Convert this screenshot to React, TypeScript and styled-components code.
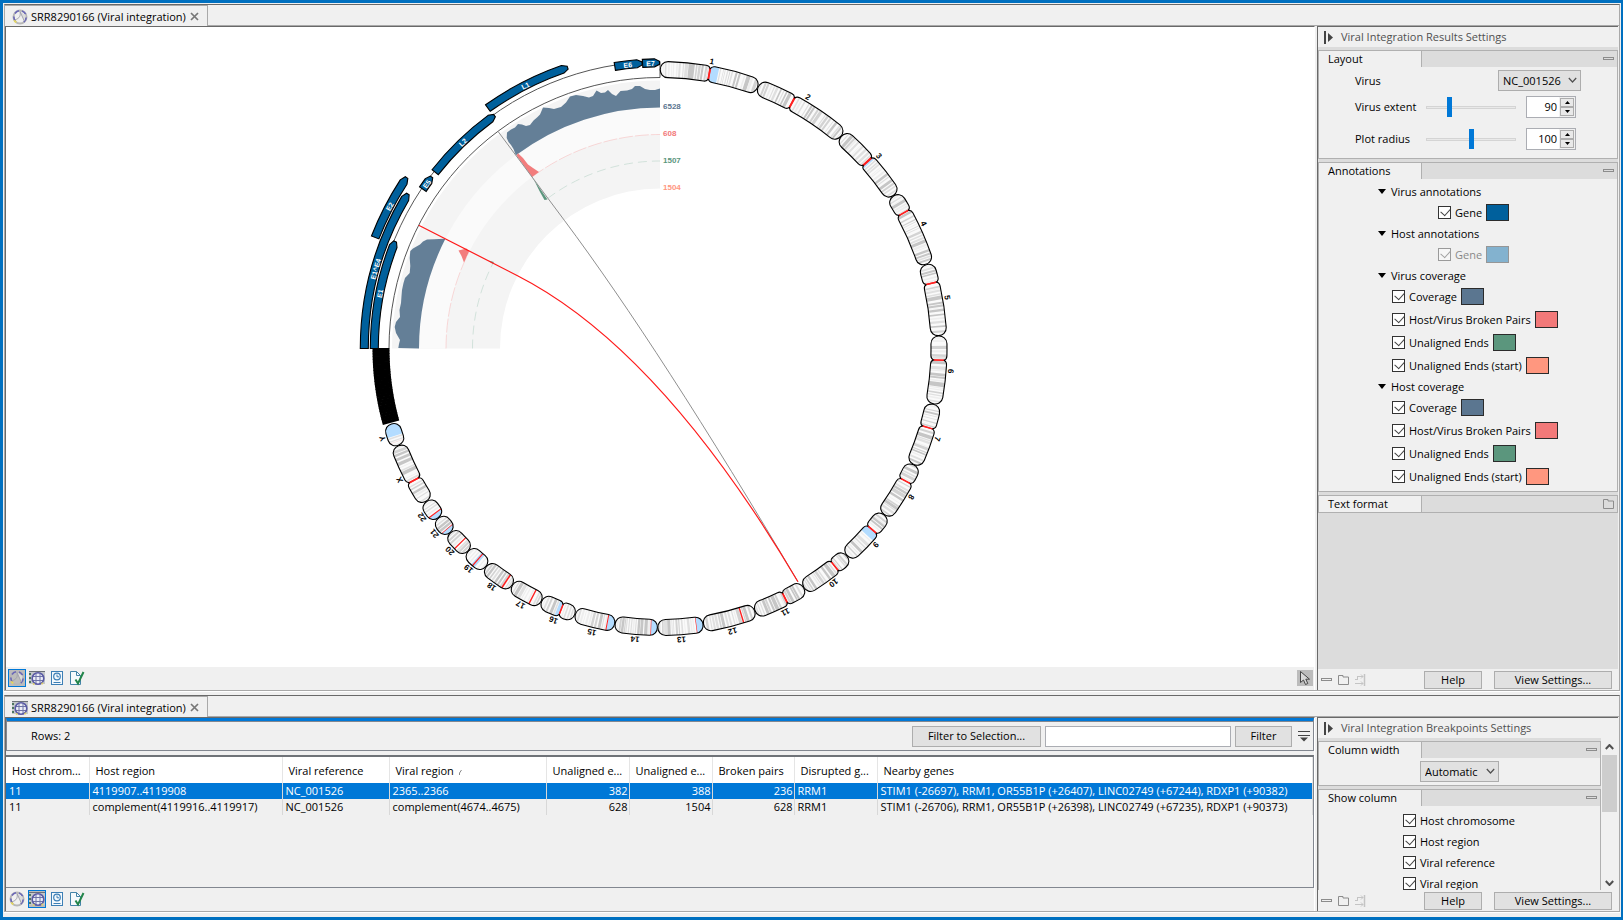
import React, { useState } from "react";
import styled, { createGlobalStyle, css } from "styled-components";

const GlobalStyle = createGlobalStyle`
  * { box-sizing: border-box; }
  body {
    margin: 0;
    background: #fff;
    color: #000;
    font-family: "Open Sans", "Noto Sans", sans-serif;
    font-size: 11px;
    line-height: 16px;
  }
  button, input, select { font: inherit; color: inherit; }
`;

const line = { dark: "#696969", mid: "#a9a9a9", box: "#828790" };

/* ---------- window frame ---------- */

const Window = styled.main`
  height: 100vh;
  display: flex;
  flex-direction: column;
  border-bottom: 1px solid #fff;
`;

const Frame = styled.div`
  flex: 1;
  min-height: 0;
  display: flex;
  flex-direction: column;
  gap: 4px;
  padding: 1px 1px 5px;
  background: #f0f0f0;
  border: 3px solid #0070c0;
  border-right-width: 2px;
`;

const Pane = styled.section<{ $grow: number }>`
  flex: ${(p) => p.$grow} 1 0;
  min-height: 0;
  display: flex;
  flex-direction: column;
  border: 1px solid ${line.mid};
  border-top-color: ${line.dark};
  box-shadow: 0 1px 0 #fff;
`;

const TabStrip = styled.div`
  flex: none;
  height: 21px;
  display: flex;
  border-bottom: 1px solid ${line.mid};
`;

const Tab = styled.div`
  height: 21px;
  display: flex;
  align-items: center;
  gap: 3px;
  padding: 1px 7px 0;
  background: #f0f0f0;
  border-right: 1px solid ${line.mid};
  border-top: 1px solid ${line.mid};
`;

const CloseButton = styled.button`
  display: flex;
  padding: 0 1px;
  border: 0;
  background: none;
`;

const PaneBody = styled.div`
  flex: 1;
  min-height: 0;
  display: flex;
  gap: 2px;
  padding-right: 1px;
`;

const Work = styled.div`
  flex: 1;
  min-width: 0;
  display: flex;
  flex-direction: column;
  border-top: 1px solid ${line.dark};
  border-left: 1px solid ${line.dark};
  border-right: 1px solid #fff;
`;

const Canvas = styled.div`
  flex: 1;
  min-height: 0;
  background: #fff;
  svg { display: block; width: 100%; height: 100%; }
`;

const StatusBar = styled.div`
  flex: none;
  height: 23px;
  display: flex;
  align-items: center;
  gap: 2px;
  padding: 0 1px 1px 2px;
`;

const ViewButton = styled.button<{ $active?: boolean }>`
  width: 18px;
  height: 18px;
  display: flex;
  align-items: center;
  justify-content: center;
  padding: 0;
  border: 1px solid ${(p) => (p.$active ? "#0078d7" : "transparent")};
  background: ${(p) => (p.$active ? "#bcbcbc" : "transparent")};
`;

const PointerButton = styled(ViewButton)`
  width: 16px;
  height: 16px;
  margin-left: auto;
  border: 0;
  background: #bcbcbc;
`;

/* ---------- side panel ---------- */

const Side = styled.aside`
  flex: 0 0 301px;
  min-width: 0;
  min-height: 0;
  display: flex;
  flex-direction: column;
  border-left: 1px solid ${line.dark};
  border-top: 1px solid ${line.dark};
`;

const SideTitle = styled.h2`
  flex: none;
  height: 20px;
  margin: 0;
  display: flex;
  align-items: center;
  gap: 7px;
  padding-left: 6px;
  font-size: 11px;
  font-weight: 400;
  color: #505050;
`;

const SideScroll = styled.div`
  flex: 1;
  min-height: 0;
  display: flex;
  background: #dcdcdc;
`;

const Sections = styled.div`
  flex: 1;
  min-width: 0;
  overflow: hidden;
  display: flex;
  flex-direction: column;
  gap: 3px;
  padding-top: 3px;
`;

const SectionBox = styled.section`
  flex: none;
  border: 1px solid #b0b0b0;
  background: #f0f0f0;
`;

const SectionHead = styled.header`
  height: 16px;
  display: flex;
  align-items: center;
  justify-content: space-between;
  padding-right: 3px;
  background: #dcdcdc;
`;

const SectionName = styled.h3`
  width: 103px;
  height: 16px;
  margin: 0;
  padding-left: 9px;
  font-size: 11px;
  font-weight: 400;
  background: #f0f0f0;
  border-right: 1px solid #b0b0b0;
`;

const IconButton = styled.button`
  display: flex;
  padding: 0;
  border: 0;
  background: none;
`;

const LayoutGrid = styled.div`
  display: grid;
  grid-template-columns: 71px 90px 1fr;
  grid-template-rows: 27px 26px 38px;
  align-items: center;
  padding: 0 36px 0 36px;
`;

const Cell = styled.div<{ $pad?: number; $wide?: boolean }>`
  grid-column: ${(p) => (p.$wide ? "2 / 4" : "auto")};
  display: flex;
  justify-content: flex-end;
  padding-right: ${(p) => p.$pad ?? 0}px;
`;

const SelectWrap = styled.span<{ $w: number }>`
  position: relative;
  display: inline-flex;
  width: ${(p) => p.$w}px;
  height: 21px;
  svg { position: absolute; right: 4px; top: 7px; pointer-events: none; }
`;

const SelectBox = styled.select`
  width: 100%;
  appearance: none;
  padding: 0 4px;
  border: 1px solid #adadad;
  border-radius: 0;
  background: #e1e1e1;
`;

const Slider = styled.input`
  width: 90px;
  height: 20px;
  margin: 0;
  appearance: none;
  background: transparent;
  &::-webkit-slider-runnable-track {
    height: 3px;
    border: 1px solid #d4d4d4;
    background: #e9e9e9;
  }
  &::-webkit-slider-thumb {
    appearance: none;
    width: 5px;
    height: 20px;
    margin-top: -10px;
    background: #0078d7;
  }
`;

const SpinnerBox = styled.span`
  width: 50px;
  height: 22px;
  flex: none;
  display: flex;
  border: 1px solid #abadb3;
  background: #fff;
`;

const SpinnerInput = styled.input`
  flex: 1;
  min-width: 0;
  padding: 0 2px 0 0;
  border: 0;
  background: none;
  text-align: right;
`;

const SpinnerButtons = styled.span`
  width: 16px;
  display: flex;
  flex-direction: column;
  padding: 1px;
  background: #f0f0f0;
`;

const SpinnerButton = styled.button`
  flex: 1;
  display: flex;
  align-items: center;
  justify-content: center;
  padding: 0;
  border: 1px solid #adadad;
  background: #e9e9e9;
`;

const Tree = styled.div`
  padding: 3px 0;
`;

const TreeHead = styled.div`
  height: 19px;
  display: flex;
  align-items: center;
  gap: 5px;
  padding-left: 59px;
`;

const TreeRow = styled.div<{ $indent: number; $h: number; $off?: boolean }>`
  height: ${(p) => p.$h}px;
  display: flex;
  align-items: center;
  gap: 4px;
  padding-left: ${(p) => p.$indent}px;
  opacity: ${(p) => (p.$off ? 0.45 : 1)};
`;

const CheckLabel = styled.label`
  display: flex;
  align-items: center;
  gap: 4px;
`;

const Check = styled.input`
  position: relative;
  width: 13px;
  height: 13px;
  margin: 0;
  appearance: none;
  border: 1px solid #333;
  background: #fff;
  &:checked::after {
    content: "";
    position: absolute;
    left: 2px;
    top: 1px;
    width: 8px;
    height: 5px;
    border: solid #444;
    border-width: 0 0 1px 1px;
    transform: rotate(-48deg);
  }
`;

const Swatch = styled.button<{ $color: string }>`
  width: 23px;
  height: 17px;
  padding: 0;
  border: 1px solid #2b2b2b;
  background: ${(p) => p.$color};
`;

const ColumnWidthRow = styled.div`
  height: 27px;
  display: flex;
  align-items: center;
  padding-left: 101px;
`;

const Columns = styled.div`
  padding-top: 4px;
`;

const ScrollRail = styled.div`
  flex: 0 0 17px;
  display: flex;
  flex-direction: column;
  align-items: center;
  padding: 6px 1px 4px;
  background: #f0f0f0;
`;

const ScrollThumb = styled.div`
  width: 15px;
  height: 57px;
  margin: 5px 0 auto;
  background: #cdcdcd;
`;

const SideFooter = styled.footer`
  flex: none;
  height: 21px;
  display: flex;
  align-items: center;
  gap: 6px;
  padding: 0 6px 0 3px;
`;

const ButtonGroup = styled.div`
  margin-left: auto;
  display: flex;
  gap: 12px;
`;

const pushButton = css`
  border: 1px solid #adadad;
  background: #e1e1e1;
  padding: 0;
  line-height: 16px;
`;

const FooterButton = styled.button<{ $w: number }>`
  ${pushButton}
  width: ${(p) => p.$w}px;
  height: 18px;
`;

/* ---------- table view ---------- */

const ToolBar = styled.div`
  flex: none;
  height: 33px;
  display: flex;
  align-items: center;
  gap: 4px;
  padding: 1px 3px 0 24px;
  border: 1px solid ${line.box};
  border-top: 3px solid #0078d7;
  box-shadow: inset 0 1px 0 ${line.box};
`;

const RowCount = styled.span`
  margin-right: auto;
`;

const FilterButton = styled.button<{ $w: number }>`
  ${pushButton}
  width: ${(p) => p.$w}px;
  height: 21px;
`;

const FilterInput = styled.input`
  width: 186px;
  height: 21px;
  padding: 0 4px;
  border: 1px solid #abadb3;
  background: #fff;
`;

const FilterMenu = styled(IconButton)`
  margin-left: 2px;
`;

const TableBox = styled.div`
  flex: 1;
  min-height: 0;
  overflow: hidden;
  margin-top: 4px;
  border: 1px solid ${line.box};
  border-top: 2px solid #6f7378;
  border-left: 0;
`;

const Table = styled.table`
  width: 100%;
  table-layout: fixed;
  border-collapse: collapse;
`;

const HeadCell = styled.th`
  height: 26px;
  padding: 1px 0 0 6px;
  overflow: hidden;
  white-space: nowrap;
  text-align: left;
  font-weight: 400;
  background: #fff;
  border-right: 1px solid #e5e5e5;
`;

const Row = styled.tr<{ $selected: boolean }>`
  color: ${(p) => (p.$selected ? "#fff" : "#000")};
  background: ${(p) => (p.$selected ? "#0078d7" : "transparent")};
`;

const BodyCell = styled.td<{ $right?: boolean }>`
  height: 16px;
  padding: 0 1px 0 3px;
  overflow: hidden;
  white-space: nowrap;
  text-align: ${(p) => (p.$right ? "right" : "left")};
  border-right: 1px solid #d8d8d8;
`;

/* ---------- icons ---------- */

const CircosIcon = () => (
  <svg width="16" height="16" viewBox="0 0 16 16" fill="none">
    <circle cx="8" cy="8" r="6.5" stroke="#b7b7b7" strokeWidth="2" />
    <path d="M3 4.5A6.3 6.3 0 0 1 7 1.7M10 1.9a6.3 6.3 0 0 1 3.6 3.2M14.2 8.5a6.3 6.3 0 0 1-2.4 4.5M1.8 7.5a6.3 6.3 0 0 0 1.8 4.6" stroke="#6a67b8" strokeWidth="1.600" />
    <path d="M2.3 11.3a6.3 6.3 0 0 0 2 2" stroke="#e6d860" strokeWidth="2" />
    <path d="M8.300 2.500 12.200 12l1.300-6z" fill="#dcdcdc" />
    <path d="M3 10.800C7.500 9.500 9 6.500 8 2.500L12.300 12" stroke="#a3a3ad" />
  </svg>
);

const GridCircosIcon = () => (
  <svg width="16" height="16" viewBox="0 0 16 16" fill="none">
    <path d="M0 1h16v13H0z" fill="#c3c7c9" />
    <path d="M0 1.500h16" stroke="#6b7079" />
    <path d="M1 3v12" stroke="#4d7560" strokeWidth="2" strokeDasharray="2 2" />
    <circle cx="9" cy="8.500" r="5.800" fill="#eceef7" />
    <path d="M3.500 6.500h11M3.500 10.500h11M7 3v11M11 3v11" stroke="#6f74a8" />
    <circle cx="9" cy="8.500" r="5.800" stroke="#5a5aa5" strokeWidth="1.600" />
    <path d="M4 13.500l1.500 1M12.500 14l1.500-1" stroke="#ddd06a" strokeWidth="1.600" />
  </svg>
);

const HistoryIcon = () => (
  <svg width="12" height="14" viewBox="0 0 12 14" fill="none" stroke="#3d7fb5">
    <rect x=".5" y=".5" width="11" height="13" fill="#f4f9fd" />
    <circle cx="6" cy="5.500" r="3.300" strokeWidth="1.200" />
    <path d="M6 3.500v2.300h2M2.500 11.500h7" />
  </svg>
);

const CheckPageIcon = () => (
  <svg width="15" height="16" viewBox="0 0 15 16" fill="none">
    <path d="M.5 1.500h6l4 4v9H.5z" fill="#f6fafc" stroke="#4584a8" />
    <path d="M6.500 1.500v4h4" stroke="#4584a8" />
    <path d="M5.500 9.500 8 13.500 13.500 2" stroke="#23854a" strokeWidth="2" />
  </svg>
);

const CursorIcon = () => (
  <svg width="12" height="16" viewBox="0 0 12 16" fill="#d9d9d9" stroke="#444">
    <path d="M1.500 1.500v11l3-2.500 2 4.500 2.300-1-2-4.300h3.700z" />
  </svg>
);

const CloseIcon = () => (
  <svg width="9" height="9" viewBox="0 0 9 9" stroke="#777" strokeWidth="1.700">
    <path d="M1 1l7 7M8 1L1 8" />
  </svg>
);

const ExpandIcon = () => (
  <svg width="10" height="13" viewBox="0 0 10 13" fill="#444">
    <rect width="2" height="13" />
    <path d="M4 2v9l5-4.500z" />
  </svg>
);

const MinusIcon = () => (
  <svg width="11" height="4" viewBox="0 0 11 4" fill="none" stroke="#8c8c8c">
    <rect x=".5" y=".5" width="10" height="2" />
  </svg>
);

const FolderIcon = () => (
  <svg width="11" height="10" viewBox="0 0 11 10" fill="none" stroke="#8c8c8c">
    <path d="M.5 9.500V.5h4.500v1.500h5.500v7.500z" />
  </svg>
);

const DockIcon = () => (
  <svg width="11" height="12" viewBox="0 0 11 12" fill="none" stroke="#c4c4c4">
    <path d="M2 2.500h6M0 5.500h3M0 9.500h8M6 .5l2 2-2 2M6 7.500l2 2-2 2M2.500 5.500v-3" />
    <path d="M9.500 0v12" strokeWidth="1.500" />
  </svg>
);

const Chevron = ({ up = false, bold = false }) => (
  <svg width="9" height="6" viewBox="0 0 9 6" fill="none" stroke="#505050" strokeWidth={bold ? 2 : 1.2}>
    <path d={up ? "M.8 5l3.700-4 3.700 4" : "M.8 1l3.700 4L8.200 1"} />
  </svg>
);

const SmallTriangle = ({ up = false }) => (
  <svg width="5" height="3" viewBox="0 0 5 3">
    <path d={up ? "M0 3h5L2.500 0z" : "M0 0h5L2.500 3z"} />
  </svg>
);

const TreeTriangle = () => (
  <svg width="8" height="5" viewBox="0 0 8 5">
    <path d="M0 0h8L4 5z" />
  </svg>
);

const FilterMenuIcon = () => (
  <svg width="12" height="11" viewBox="0 0 12 11" fill="#444">
    <path d="M0 0h12v1H0zM0 4h12v1H0zM2 6.500h8L6 10.500z" />
  </svg>
);

const SortMark = () => (
  <svg width="9" height="6" viewBox="0 0 9 6" fill="none" stroke="#888">
    <path d="M5.500 6V4l2-3" />
  </svg>
);

/* ---------- circular plot ---------- */

const CX = 660;
const CY = 348.5;
const RING_IN = 271;
const RING_OUT = 287;
const RING_MID = (RING_IN + RING_OUT) / 2;
const DEG_PER_MB = 0.08245;

type Pt = [number, number];
/* angles run clockwise from twelve o'clock */
const at = (r: number, deg: number): Pt => {
  const a = (deg * Math.PI) / 180;
  return [CX + r * Math.sin(a), CY - r * Math.cos(a)];
};
const s = (p: Pt) => `${p[0].toFixed(2)} ${p[1].toFixed(2)}`;
const arc = (r: number, to: number, cw = true) => `A${r} ${r} 0 0 ${cw ? 1 : 0} ${s(at(r, to))}`;
const sector = (r0: number, r1: number, a0: number, a1: number) =>
  `M${s(at(r1, a0))}${arc(r1, a1)}L${s(at(r0, a1))}${arc(r0, a0, false)}Z`;

type Chromosome = { n: string; len: number; red: Pt; pinch?: boolean; blue?: Pt; bands: string };

/* bands: start-end:shade, positions in megabases */
const chromosomes: Chromosome[] = [
  { n: "1", len: 249, red: [121, 125.5], pinch: true, blue: [125.5, 144], bands: "2-5:1 7-9:1 12-16:2 20-24:1 28-30:1 32-35:1 40-44:1 46-51:2 56-59:2 61-69:2 70-85:4 88-92:3 94-100:3 102-107:4 111-116:3 117-120:2 147-150:2 155-157:2 159-161:2 165-168:2 171-173:3 176-180:2 186-191:4 194-199:4 207-211:1 214-224:4 224-231:1 236-244:3" },
  { n: "2", len: 242, red: [91, 96], pinch: true, bands: "4-7:2 12-17:3 19-24:3 28-32:1 36-39:2 42-48:2 53-57:4 61-64:2 68-72:4 75-83:4 102-106:2 109-114:1 118-122:2 130-133:2 137-142:4 144-149:4 155-160:3 162-170:3 178-181:2 183-189:3 192-197:3 203-205:2 209-215:4 221-225:2 226-231:4 235-237:2" },
  { n: "3", len: 198, red: [88, 93.5], pinch: true, blue: [93.5, 97], bands: "2-4:2 9-12:2 16-24:4 26-31:3 32-36:1 39-44:2 50-52:1 54-59:2 64-70:2 74-80:2 83-87:2 100-104:2 107-111:2 113-117:2 122-124:1 126-129:1 134-139:1 143-149:4 152-155:2 161-168:4 171-176:3 179-183:2 188-192:2" },
  { n: "4", len: 190, red: [48, 51.5], pinch: true, bands: "4-8:1 11-15:2 18-20:1 21-28:4 31-36:1 37-42:1 45-48:2 53-59:4 66-70:3 76-79:3 82-84:2 88-90:1 94-96:3 99-101:2 108-114:3 117-121:2 124-129:2 131-139:4 141-147:1 149-151:1 156-162:4 165-170:4 172-176:2 178-183:4 187-190:1" },
  { n: "5", len: 181, red: [47, 50.5], pinch: true, bands: "4-6:1 10-15:2 18-23:4 25-29:4 34-38:1 42-46:1 59-63:3 64-67:1 68-73:2 77-81:2 83-92:4 98-103:4 105-110:4 112-113:1 115-121:4 127-131:4 136-140:1 144-150:2 156-160:4 168-173:3" },
  { n: "6", len: 171, red: [59, 62], pinch: true, bands: "4-7:1 10-12:1 13-15:1 25-33:3 36-41:1 46-52:3 53-57:2 63-70:4 76-84:2 85-88:1 93-100:4 101-106:4 109-113:1 115-126:4 127-130:1 132-135:1 139-143:3 146-149:2 152-156:1 161-165:2" },
  { n: "7", len: 159, red: [58.5, 61.5], pinch: true, bands: "4-7:1 14-17:3 20-25:4 28-30:2 35-37:2 43-46:3 49-50:1 53-57:3 67-72:3 77-86:4 88-91:2 92-98:2 104-106:1 107-114:3 118-121:3 123-127:4 130-133:1 138-143:2 147-152:4 155-157:1" },
  { n: "8", len: 145, red: [44, 47], pinch: true, bands: "2-6:3 12-19:4 23-27:2 29-36:3 39-43:1 52-55:3 61-66:2 68-74:4 75-84:3 87-93:4 99-101:1 106-110:3 111-118:4 119-122:2 125-131:2 136-140:3" },
  { n: "9", len: 138, red: [46, 49.5], pinch: true, blue: [49.5, 66], bands: "2-5:1 9-14:3 16-20:1 20-26:4 28-33:4 36-39:1 70-73:1 79-87:2 90-94:2 97-99:1 102-109:4 112-115:1 118-122:3 126-131:1 134-136:1" },
  { n: "10", len: 134, red: [38.5, 41.5], pinch: true, bands: "3-6:3 12-17:3 18-22:2 29-32:3 34-38:2 46-50:2 52-61:4 65-71:4 78-82:2 84-90:3 92-95:2 97-101:1 106-112:4 115-119:3 121-124:2 127-131:2" },
  { n: "11", len: 135, red: [51.5, 55.5], pinch: true, bands: "3-6:1 11-16:2 21-26:4 27-31:4 36-43:4 44-49:3 56-60:3 61-64:1 70-75:3 77-86:4 88-93:4 97-102:3 103-110:4 114-117:2 121-124:2 127-131:2" },
  { n: "12", len: 133, red: [33.5, 37], bands: "3-5:2 10-15:3 20-27:4 28-31:3 38-46:3 49-52:1 55-58:2 63-68:2 71-76:2 80-87:4 89-93:3 96-102:2 104-109:2 112-115:2 120-126:3 129-131:2" },
  { n: "13", len: 114, red: [17, 18.5], blue: [0, 17], bands: "23-26:1 28-32:1 34-40:2 45-47:1 51-55:2 59-62:3 64-69:3 73-75:2 77-79:2 82-90:4 90-98:2 99-103:3 107-112:2" },
  { n: "14", len: 107, red: [16, 17.5], blue: [0, 16], bands: "19-24:1 25-33:4 36-43:4 44-50:4 53-56:2 58-62:1 64-67:2 70-73:2 76-79:2 80-83:3 84-90:4 91-96:3 98-103:1" },
  { n: "15", len: 102, red: [18, 20.5], blue: [0, 18], bands: "21-25:1 28-31:2 33-40:4 44-49:3 52-58:3 60-64:1 67-72:1 76-78:1 81-86:1 89-94:2 96-100:1" },
  { n: "16", len: 90, red: [35.5, 38], pinch: true, blue: [38, 46], bands: "6-10:2 13-17:2 21-25:2 28-31:1 48-52:2 54-61:4 66-71:3 74-79:2 82-84:1" },
  { n: "17", len: 83, red: [23, 26.5], bands: "6-10:3 12-16:2 28-32:1 38-41:1 45-48:1 50-58:2 60-68:4 70-74:2 77-80:1" },
  { n: "18", len: 80, red: [16, 20], bands: "3-7:2 9-12:2 20-25:3 28-33:4 36-42:4 45-50:2 53-57:3 60-66:4 68-73:3 75-78:1" },
  { n: "19", len: 59, red: [25.5, 28.5], blue: [22, 31], bands: "3-7:1 12-15:1 35-39:1 43-46:1 50-55:1" },
  { n: "20", len: 64, red: [26.5, 29.5], bands: "5-10:3 12-17:3 18-22:2 33-38:1 41-46:3 49-54:3 57-61:2" },
  { n: "21", len: 47, red: [11.5, 13], blue: [0, 11.5], bands: "16-22:4 24-30:4 33-37:2 40-43:1" },
  { n: "22", len: 51, red: [13, 16], blue: [0, 13], bands: "20-24:1 28-32:2 35-38:2 42-46:1" },
  { n: "X", len: 156, red: [59, 63], pinch: true, bands: "5-9:2 17-20:2 24-29:1 31-37:4 42-46:3 49-53:2 65-70:2 73-75:1 84-93:4 94-98:2 103-105:1 109-117:4 121-128:4 132-138:4 140-147:3 149-152:1" },
  { n: "Y", len: 57, red: [10, 11], blue: [27, 57], bands: "3-6:1 13-16:2 20-24:2" },
];

const shades = ["#fff", "#eeeeee", "#e0e0e0", "#d3d3d3", "#c6c6c6"];

const outline = (a0: number, a1: number, cen: number | null) => {
  const c = Math.min(1.6, (a1 - a0) / 2);
  const k = c / 3;
  const top =
    cen === null
      ? arc(RING_OUT, a1 - c)
      : `${arc(RING_OUT, cen - 0.9)}Q${s(at(RING_OUT, cen - 0.2))} ${s(at(RING_MID + 5, cen))}Q${s(at(RING_OUT, cen + 0.2))} ${s(at(RING_OUT, cen + 0.9))}${arc(RING_OUT, a1 - c)}`;
  const bottom =
    cen === null
      ? arc(RING_IN, a0 + c, false)
      : `${arc(RING_IN, cen + 0.9, false)}Q${s(at(RING_IN, cen + 0.2))} ${s(at(RING_MID - 5, cen))}Q${s(at(RING_IN, cen - 0.2))} ${s(at(RING_IN, cen - 0.9))}${arc(RING_IN, a0 + c, false)}`;
  return (
    `M${s(at(RING_OUT, a0 + c))}${top}C${s(at(RING_OUT, a1 + k))} ${s(at(RING_IN, a1 + k))} ${s(at(RING_IN, a1 - c))}` +
    `${bottom}C${s(at(RING_IN, a0 - k))} ${s(at(RING_OUT, a0 - k))} ${s(at(RING_OUT, a0 + c))}Z`
  );
};

const placed = chromosomes.map((c, i) => {
  const before = chromosomes.slice(0, i).reduce((sum, x) => sum + x.len, 0);
  return { ...c, a0: before * DEG_PER_MB + 0.05, a1: (before + c.len) * DEG_PER_MB - 0.05, pos: (mb: number) => (before + mb) * DEG_PER_MB };
});

/* unplaced contigs, too short to tell apart: overlapping outlines */
const contigs = Array.from({ length: 28 }, (_, i) => 254.9 + i * 0.55);

const PlotText = ({ r, a, size = 8, fill = "#000", children }: { r: number; a: number; size?: number; fill?: string; children: string }) => {
  const [x, y] = at(r, a);
  return (
    <text
      transform={`translate(${x.toFixed(1)} ${y.toFixed(1)}) rotate(${a.toFixed(1)})`}
      textAnchor="middle"
      dy="3"
      fontSize={size}
      fontWeight="700"
      fill={fill}
    >
      {children}
    </text>
  );
};

const genes = [
  { n: "E1", r: 285.7, a0: 270, a1: 292, label: 281.1 },
  { n: "E1^E4", r: 295.7, a0: 270, a1: 301.5, label: 285.6 },
  { n: "E2", r: 305.7, a0: 291.3, a1: 304, label: 297.7 },
  { n: "E5", r: 285.7, a0: 303.9, a1: 306.9, label: 305.2 },
  { n: "L2", r: 285.7, a0: 308.1, a1: 324.6, label: 316.3 },
  { n: "L1", r: 295.7, a0: 324.4, a1: 341.8, label: 332.9 },
  { n: "E6", r: 285.7, a0: 350.9, a1: 356.4, label: 353.5 },
  { n: "E7", r: 285.7, a0: 356.5, a1: 359.9, label: 358.1 },
];

const genePath = (r: number, a0: number, a1: number) => {
  const neck = a1 - 1;
  return `M${s(at(r + 4, a0))}${arc(r + 4, neck)}L${s(at(r + 1.5, a1))}L${s(at(r - 1.5, a1))}L${s(at(r - 4, neck))}${arc(r - 4, a0, false)}Z`;
};

const BREAK_A = 297.07;
const BREAK_B = 323.27;
const HOST_BREAK = 149.4;

const coverageLeft =
  "L398.300 348 399 344 400 340 396 333 394.700 327 396 322 400 317 399.500 310 401 303 401.500 296 402 290 403.500 283 405 278 409.700 273 410.300 266 409.700 258 410.300 251 413 248.500 420 244.500 423 241.500 427 239.500 434 239.300 439 239 444 238.700";
const coverageRight =
  "L513.500 149 511 145 508.500 142 506.700 138 507 132.500 511 129.500 515 127.500 518 124 522 124.500 526 126 530 125 533.500 120.500 537 117.500 540 114.500 543 107.500 549 108 554 109 561 107 566 102.500 570 96.500 576 95 583 96 589 97.500 593 96 596.500 90.500 601 93 605 92.500 608 90 612 94 616 96 620.500 91 627 90.500 632 89 635 86 640 86 645 89 650 90 655 90 660 88.500";

const link = (a: number) =>
  `M${s(at(RING_IN, a))}L${s(at(160, a))}Q${CX} ${CY} ${s(at(RING_IN, HOST_BREAK))}`;

const values = [
  { v: "6528", y: 109, fill: "#5b7690" },
  { v: "608", y: 136, fill: "#f27979" },
  { v: "1507", y: 163, fill: "#5b967d" },
  { v: "1504", y: 190, fill: "#ff977f" },
];

const CircularPlot = () => (
  <svg viewBox="6 27 1308 640" fontFamily='"Liberation Sans", sans-serif' role="img" aria-label="Viral integration plot">
    <defs>
      {placed.map((c) => (
        <clipPath id={`chr-${c.n}`} key={c.n}>
          <path d={outline(c.a0, c.a1, c.pinch ? c.pos((c.red[0] + c.red[1]) / 2) : null)} />
        </clipPath>
      ))}
    </defs>

    <path d={sector(160, 268, 270, 360)} fill="#f4f4f4" />
    <path d={sector(214, 241, 270, 360)} fill="#fafafa" />
    <path d={`M${s(at(214, 270))}${arc(214, BREAK_A)}M${s(at(214, BREAK_B))}${arc(214, 360)}`} fill="none" stroke="#f7a5a5" strokeWidth=".4" strokeDasharray="14 2" />
    <path d={`M${s(at(187.5, 270))}${arc(187.5, BREAK_A)}M${s(at(187.5, BREAK_B))}${arc(187.5, 360)}`} fill="none" stroke="#9cc4b3" strokeWidth=".4" strokeDasharray="9 5" />
    <path d={`M${s(at(241, 270))}${coverageLeft}L${s(at(241, BREAK_A))}${arc(241, 270, false)}Z`} fill="#647f97" />
    <path d={`M${s(at(241, BREAK_B))}${coverageRight}L${s(at(241, 360))}${arc(241, BREAK_B, false)}Z`} fill="#647f97" />
    <path d="M518 153.300 516.500 155.500 532 177 539 172 533 168 528 164.500 523 158z" fill="#f27d7d" />
    <path d="M458.500 250.500 466.500 248.500 469 251.500 464 262.500 461.500 256z" fill="#f27d7d" />
    <path d="M532 177 547.500 199.500 544.500 200 540 192 535 182z" fill="#5b967d" />
    <path d="M488 260.500 494 262 492.500 263.800z" fill="#5b967d" />

    <path d={`M${s(at(RING_IN, 270))}${arc(RING_IN, 360)}L${s(at(RING_OUT, 360))}${arc(RING_OUT, 270, false)}Z`} fill="none" stroke="#555" strokeWidth="1" />
    {contigs.map((a) => {
      const [x, y] = at(RING_MID, a);
      return <rect key={a} x={x - 8.5} y={y - 1.7} width="17" height="3.4" transform={`rotate(${(a - 270).toFixed(1)} ${x.toFixed(1)} ${y.toFixed(1)})`} />;
    })}

    {genes.map((g) => (
      <g key={g.n}>
        <path d={genePath(g.r, g.a0, g.a1)} fill="#00609c" stroke="#000" strokeWidth="1.100" />
        <PlotText r={g.r} a={g.label} size={7} fill="#fff">{g.n}</PlotText>
      </g>
    ))}

    {placed.map((c) => (
      <g key={c.n}>
        <g clipPath={`url(#chr-${c.n})`}>
          <path d={sector(RING_IN - 1, RING_OUT + 1, c.a0 - 0.5, c.a1 + 0.5)} fill="#fafafa" />
          {c.bands.split(" ").map((b) => {
            const [span, shade] = b.split(":");
            const [from, to] = span.split("-").map(Number);
            return <path key={b} d={sector(RING_IN - 1, RING_OUT + 1, c.pos(from), c.pos(to))} fill={shades[Number(shade)]} />;
          })}
          {c.blue && <path d={sector(RING_IN - 1, RING_OUT + 1, c.pos(c.blue[0]) - 0.1, c.pos(c.blue[1]) + 0.05)} fill="#b3dcff" />}
          <path d={sector(RING_IN - 1, RING_OUT + 1, c.pos(c.red[0]), c.pos(c.red[1]))} fill={c.n === "Y" ? "#f6d5d5" : "#ff2222"} />
        </g>
        <path d={outline(c.a0, c.a1, c.pinch ? c.pos((c.red[0] + c.red[1]) / 2) : null)} fill="none" stroke="#000" strokeWidth="1.100" />
        {c.pinch && (
          <path
            d={`M${s(at(RING_MID - 5, c.pos((c.red[0] + c.red[1]) / 2)))}L${s(at(RING_MID + 5, c.pos((c.red[0] + c.red[1]) / 2)))}`}
            stroke="#ff2222"
            strokeWidth="1.500"
          />
        )}
        <PlotText r={292} a={(c.a0 + c.a1) / 2}>{c.n}</PlotText>
      </g>
    ))}

    {values.map((v) => (
      <text key={v.v} x="663" y={v.y} fontSize="8" fontWeight="700" fill={v.fill}>{v.v}</text>
    ))}

    <path d={link(BREAK_B)} fill="none" stroke="#8f8f8f" strokeWidth="1" />
    <path d={link(BREAK_A)} fill="none" stroke="#ff1a1a" strokeWidth="1.200" />
  </svg>
);

/* ---------- composed controls ---------- */

const EditorTab = ({ icon }: { icon: React.ReactNode }) => (
  <TabStrip>
    <Tab>
      {icon}
      <span>SRR8290166 (Viral integration)</span>
      <CloseButton aria-label="Close"><CloseIcon /></CloseButton>
    </Tab>
  </TabStrip>
);

const ViewSwitcher = ({ active }: { active: "plot" | "table" }) => (
  <>
    <ViewButton $active={active === "plot"} aria-label="Plot view"><CircosIcon /></ViewButton>
    <ViewButton $active={active === "table"} aria-label="Table view"><GridCircosIcon /></ViewButton>
    <ViewButton aria-label="History"><HistoryIcon /></ViewButton>
    <ViewButton aria-label="Element info"><CheckPageIcon /></ViewButton>
  </>
);

const Section = ({ name, collapsed, children }: { name: string; collapsed?: boolean; children?: React.ReactNode }) => (
  <SectionBox>
    <SectionHead>
      <SectionName>{name}</SectionName>
      <IconButton aria-label={`Toggle ${name}`}>{collapsed ? <FolderIcon /> : <MinusIcon />}</IconButton>
    </SectionHead>
    {children}
  </SectionBox>
);

const Footer = () => (
  <SideFooter>
    <IconButton aria-label="Collapse all"><MinusIcon /></IconButton>
    <IconButton aria-label="Expand all"><FolderIcon /></IconButton>
    <IconButton aria-label="Dock" disabled><DockIcon /></IconButton>
    <ButtonGroup>
      <FooterButton $w={58}>Help</FooterButton>
      <FooterButton $w={118}>View Settings...</FooterButton>
    </ButtonGroup>
  </SideFooter>
);

const NumberRow = ({ label, id, min, max, initial }: { label: string; id: string; min: number; max: number; initial: number }) => {
  const [value, setValue] = useState(initial);
  return (
    <>
      <label htmlFor={id}>{label}</label>
      <Slider type="range" aria-label={label} min={min} max={max} value={value} onChange={(e) => setValue(Number(e.target.value))} />
      <Cell $pad={5}>
        <SpinnerBox>
          <SpinnerInput id={id} value={value} onChange={(e) => setValue(Number(e.target.value) || 0)} />
          <SpinnerButtons>
            <SpinnerButton aria-label="Increase" onClick={() => setValue(value + 1)}><SmallTriangle up /></SpinnerButton>
            <SpinnerButton aria-label="Decrease" onClick={() => setValue(value - 1)}><SmallTriangle /></SpinnerButton>
          </SpinnerButtons>
        </SpinnerBox>
      </Cell>
    </>
  );
};

const Option = ({ label, indent, height = 23, color, disabled }: { label: string; indent: number; height?: number; color?: string; disabled?: boolean }) => (
  <TreeRow $indent={indent} $h={height} $off={disabled}>
    <CheckLabel>
      <Check type="checkbox" defaultChecked disabled={disabled} />
      {label}
    </CheckLabel>
    {color && <Swatch $color={color} disabled={disabled} aria-label={`${label} colour`} />}
  </TreeRow>
);

const Group = ({ title, children }: { title: string; children: React.ReactNode }) => (
  <>
    <TreeHead><TreeTriangle />{title}</TreeHead>
    {children}
  </>
);

const coverageTracks = [
  ["Coverage", "#5b7690"],
  ["Host/Virus Broken Pairs", "#f27979"],
  ["Unaligned Ends", "#5b967d"],
  ["Unaligned Ends (start)", "#ff977f"],
];

const CoverageOptions = () => (
  <>{coverageTracks.map(([label, color]) => <Option key={label} label={label} color={color} indent={73} />)}</>
);

const columns: { name: string; width?: number; right?: boolean; sorted?: boolean }[] = [
  { name: "Host chrom...", width: 83 },
  { name: "Host region", width: 193 },
  { name: "Viral reference", width: 107 },
  { name: "Viral region", width: 157, sorted: true },
  { name: "Unaligned e...", width: 83, right: true },
  { name: "Unaligned e...", width: 83, right: true },
  { name: "Broken pairs", width: 82, right: true },
  { name: "Disrupted g...", width: 83 },
  { name: "Nearby genes" },
];

const rows = [
  ["11", "4119907..4119908", "NC_001526", "2365..2366", "382", "388", "236", "RRM1", "STIM1 (-26697), RRM1, OR55B1P (+26407), LINC02749 (+67244), RDXP1 (+90382)"],
  ["11", "complement(4119916..4119917)", "NC_001526", "complement(4674..4675)", "628", "1504", "628", "RRM1", "STIM1 (-26706), RRM1, OR55B1P (+26398), LINC02749 (+67235), RDXP1 (+90373)"],
];

export default function App() {
  return (
    <Window>
      <GlobalStyle />
      <Frame>
        <Pane $grow={685}>
          <EditorTab icon={<CircosIcon />} />
          <PaneBody>
            <Work>
              <Canvas><CircularPlot /></Canvas>
              <StatusBar>
                <ViewSwitcher active="plot" />
                <PointerButton aria-label="Pointer"><CursorIcon /></PointerButton>
              </StatusBar>
            </Work>
            <Side>
              <SideTitle><ExpandIcon />Viral Integration Results Settings</SideTitle>
              <SideScroll>
                <Sections>
                  <Section name="Layout">
                    <LayoutGrid>
                      <label htmlFor="virus">Virus</label>
                      <Cell $wide>
                        <SelectWrap $w={83}>
                          <SelectBox id="virus"><option>NC_001526</option></SelectBox>
                          <Chevron />
                        </SelectWrap>
                      </Cell>
                      <NumberRow label="Virus extent" id="extent" min={10} max={350} initial={90} />
                      <NumberRow label="Plot radius" id="radius" min={0} max={200} initial={100} />
                    </LayoutGrid>
                  </Section>
                  <Section name="Annotations">
                    <Tree>
                      <Group title="Virus annotations"><Option label="Gene" color="#00609c" indent={119} /></Group>
                      <Group title="Host annotations"><Option label="Gene" color="#0068a8" indent={119} disabled /></Group>
                      <Group title="Virus coverage"><CoverageOptions /></Group>
                      <Group title="Host coverage"><CoverageOptions /></Group>
                    </Tree>
                  </Section>
                  <Section name="Text format" collapsed />
                </Sections>
              </SideScroll>
              <Footer />
            </Side>
          </PaneBody>
        </Pane>

        <Pane $grow={215}>
          <EditorTab icon={<GridCircosIcon />} />
          <PaneBody>
            <Work>
              <ToolBar>
                <RowCount>Rows: 2</RowCount>
                <FilterButton $w={129}>Filter to Selection...</FilterButton>
                <FilterInput aria-label="Filter text" />
                <FilterButton $w={57}>Filter</FilterButton>
                <FilterMenu aria-label="Filter options"><FilterMenuIcon /></FilterMenu>
              </ToolBar>
              <TableBox>
                <Table>
                  <colgroup>
                    {columns.map((c, i) => <col key={i} width={c.width} />)}
                  </colgroup>
                  <thead>
                    <tr>
                      {columns.map((c, i) => <HeadCell key={i} scope="col">{c.name}{c.sorted && <SortMark />}</HeadCell>)}
                    </tr>
                  </thead>
                  <tbody>
                    {rows.map((r, i) => (
                      <Row key={i} $selected={i === 0}>
                        {r.map((v, j) => <BodyCell key={j} $right={columns[j].right}>{v}</BodyCell>)}
                      </Row>
                    ))}
                  </tbody>
                </Table>
              </TableBox>
              <StatusBar><ViewSwitcher active="table" /></StatusBar>
            </Work>
            <Side>
              <SideTitle><ExpandIcon />Viral Integration Breakpoints Settings</SideTitle>
              <SideScroll>
                <Sections>
                  <Section name="Column width">
                    <ColumnWidthRow>
                      <SelectWrap $w={79}>
                        <SelectBox aria-label="Column width"><option>Automatic</option></SelectBox>
                        <Chevron />
                      </SelectWrap>
                    </ColumnWidthRow>
                  </Section>
                  <Section name="Show column">
                    <Columns>
                      {["Host chromosome", "Host region", "Viral reference", "Viral region"].map((name) => (
                        <Option key={name} label={name} indent={84} height={21} />
                      ))}
                    </Columns>
                  </Section>
                </Sections>
                <ScrollRail>
                  <Chevron up bold />
                  <ScrollThumb />
                  <Chevron bold />
                </ScrollRail>
              </SideScroll>
              <Footer />
            </Side>
          </PaneBody>
        </Pane>
      </Frame>
    </Window>
  );
}
